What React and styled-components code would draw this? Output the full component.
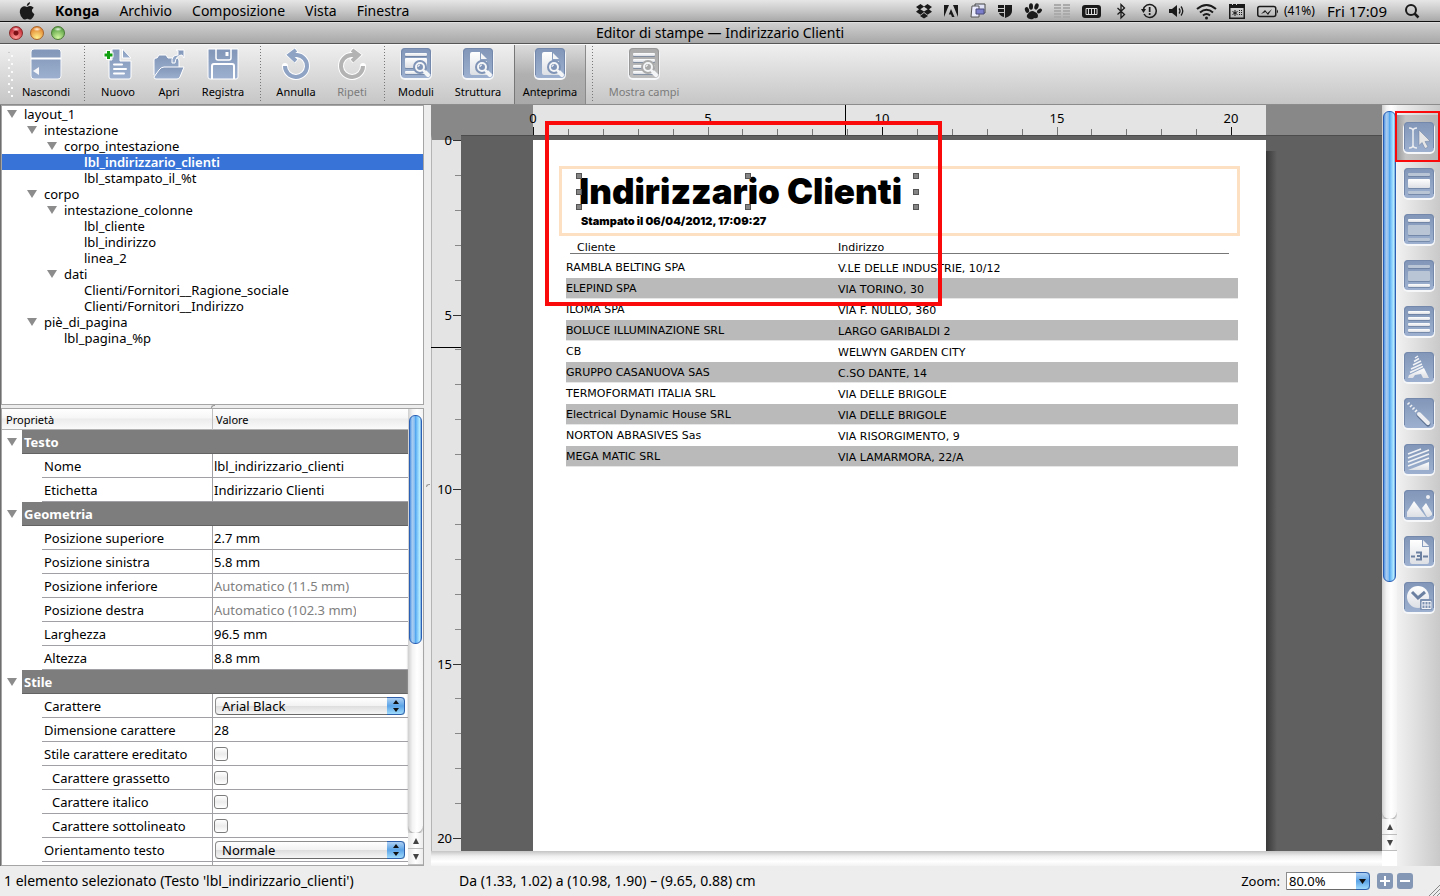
import React from "react";
import styled, { createGlobalStyle, css } from "styled-components";

const Global = createGlobalStyle`
  *, *::before, *::after { box-sizing: border-box; }
  html, body, #root { margin: 0; height: 100%; }
  body {
    font-family: "Noto Sans", "Open Sans", sans-serif;
    font-size: 13px;
    line-height: 16px;
    color: #000;
    background: #ededed;
    overflow: hidden;
  }
  button { font: inherit; color: inherit; background: none; border: 0; padding: 0; margin: 0; }
  h1, h2, p, ul { margin: 0; padding: 0; }
`;

/* ---------- shell ---------- */

const Screen = styled.div`
  display: flex;
  flex-direction: column;
  height: 100vh;
  min-width: 1100px;
`;

const MenuBar = styled.nav`
  display: flex;
  align-items: center;
  justify-content: space-between;
  flex: none;
  height: 22px;
  padding: 0 20px 0 19px;
  border-bottom: 1px solid #111;
  background: linear-gradient(#e6e6e6, #c9c9c9 50%, #a9a9a9);
  font-size: 14px;
`;

const MenuGroup = styled.div`
  display: flex;
  align-items: center;
  gap: ${(p) => p.$gap}px;
`;

const MenuItem = styled.button`
  font-weight: ${(p) => (p.$bold ? 700 : 400)};
  line-height: 20px;
`;

const StatusIcons = styled(MenuGroup)`
  svg { display: block; flex: none; }
`;

const Battery = styled.span`
  display: flex;
  align-items: center;
  gap: 5px;
  font-size: 12px;
`;

const Clock = styled.span`
  padding-right: 5px;
  font-size: 15px;
`;

const TitleBar = styled.header`
  position: relative;
  display: flex;
  align-items: center;
  justify-content: center;
  flex: none;
  height: 22px;
  border-top: 1px solid #dedede;
  border-bottom: 1px solid #565656;
  background: linear-gradient(#cfcfcf, #a8a8a8);
`;

const WindowTitle = styled.h1`
  font-size: 14px;
  font-weight: 400;
`;

const Lights = styled.div`
  position: absolute;
  left: 9px;
  top: 3px;
  display: flex;
  gap: 7px;
`;

const Light = styled.button`
  width: 14px;
  height: 14px;
  border-radius: 50%;
  border: 1px solid ${(p) => p.$edge};
  background:
    radial-gradient(ellipse 4px 2px at 50% 18%, rgba(255, 255, 255, 0.9), rgba(255, 255, 255, 0)),
    ${(p) => (p.$dot ? "radial-gradient(circle at 50% 50%, #7c1016 2px, transparent 3px)," : "")}
    radial-gradient(circle at 50% 90%, ${(p) => p.$glow}, ${(p) => p.$fill} 75%);
`;

/* ---------- toolbar ---------- */

const ToolBar = styled.div`
  display: flex;
  flex: none;
  height: 61px;
  border-top: 1px solid #f8f8f8;
  border-bottom: 1px solid #8c8c8c;
  background: linear-gradient(#efefef, #c6c6c6);
`;

const Grip = styled.span`
  width: 6px;
  margin: 6px 0 6px 8px;
  background:
    linear-gradient(#f6f6f6, #bdbdbd) 0 0 / 2px 2px no-repeat,
    radial-gradient(circle at 1px 1px, #fafafa 1px, transparent 1px) 0 0 / 6px 8px,
    radial-gradient(circle at 4px 5px, #fafafa 1px, transparent 1px) 0 0 / 6px 8px;
`;

const ToolButton = styled.button`
  display: flex;
  flex-direction: column;
  align-items: center;
  gap: 4px;
  width: ${(p) => p.$w}px;
  padding-top: 3px;
  font-size: 11px;
  color: ${(p) => (p.disabled ? "#7b7b7b" : "#000")};
  svg { display: block; }
  ${(p) =>
    p.$active &&
    css`
      border-left: 1px solid #777;
      border-right: 1px solid #8a8a8a;
      background: linear-gradient(#dcdcdc, #b0b0b0 50%, #a9a9a9);
    `}
`;

const Divider = styled.span`
  width: 12px;
  margin: 1px 0 3px;
  background: repeating-linear-gradient(#777 0 1px, transparent 1px 3px) 6px 0 / 1px 100% no-repeat;
`;

/* ---------- main area ---------- */

const Body = styled.div`
  display: flex;
  flex: 1;
  min-height: 0;
  border-left: 1px solid #6e6e6e;
`;

const Side = styled.aside`
  display: flex;
  flex-direction: column;
  flex: none;
  width: 423px;
  min-height: 0;
`;

const TreePanel = styled.ul`
  flex: none;
  height: 300px;
  border: 1px solid #a5a5a5;
  background: #fff;
  list-style: none;
`;

const TreeRow = styled.li`
  display: flex;
  align-items: center;
  gap: 2px;
  height: 16px;
  padding-left: ${(p) => p.$depth * 20}px;
  ${(p) => p.$selected && "background: #3874d8; color: #fff; font-weight: 600;"}
`;

const Twist = styled.span`
  display: flex;
  justify-content: center;
  flex: none;
  width: 20px;
  visibility: ${(p) => (p.$shown ? "visible" : "hidden")};
  &::after {
    content: "";
    border: 5px solid transparent;
    border-top: 8px solid #8c8c8c;
    border-bottom: 0;
  }
`;

const Splitter = styled.div`
  display: flex;
  align-items: center;
  justify-content: center;
  flex: none;
  ${(p) => (p.$vertical ? "width: 7px;" : "height: 3px;")}
  &::after {
    content: "";
    width: 4px;
    height: 3px;
    border: 1px solid #999;
    border-width: 1px 0 0 1px;
    border-radius: 3px 0 0 0;
  }
`;

const PropPanel = styled.section`
  display: flex;
  flex: 1;
  min-height: 0;
  border: 1px solid #a5a5a5;
  background: #fff;
`;

const PropView = styled.div`
  flex: 1;
  min-width: 0;
  overflow: hidden;
`;

const PropTable = styled.table`
  width: 100%;
  table-layout: fixed;
  border-collapse: separate;
  border-spacing: 0;
  td, th { padding: 0; text-align: left; white-space: nowrap; overflow: hidden; }
`;

const HeadCell = styled.th`
  height: 21px;
  border-bottom: 1px solid #b2b2b2;
  background: linear-gradient(#fff, #f6f6f6 45%, #ececec 50%, #fafafa);
  font-size: 11px;
  font-weight: 400;
  && { padding: 2px 0 0 4px; }
  & + & { border-left: 1px solid #c0c0c0; padding-left: 3px; }
`;

const SectionCell = styled.th`
  height: 24px;
  border-bottom: 1px solid #636363;
  background: #7d7d7d;
  color: #fff;
  font-weight: 700;
  && { padding-left: 2px; }
`;

const NameCell = styled.td`
  height: 24px;
  border-bottom: 1px solid #a0a0a5;
  && { padding-left: ${(p) => (p.$sub ? 10 : 2)}px; }
`;

const ValueCell = styled.td`
  height: 24px;
  border-bottom: 1px solid #a0a0a5;
  border-left: 1px solid #a0a0a5;
  color: ${(p) => (p.$auto ? "#808080" : "#000")};
  && { padding-left: 1px; }
`;

const ClipText = styled.span`
  display: block;
  width: 142px;
  overflow: hidden;
`;

const Check = styled.input`
  appearance: none;
  display: block;
  width: 14px;
  height: 14px;
  margin: 0;
  border: 1px solid #7d7d7d;
  border-radius: 3px;
  background: linear-gradient(#fff, #ececec 50%, #fff);
`;

const SelectBox = styled.div`
  position: relative;
  width: 190px;
  height: 18px;
  margin-left: ${(p) => (p.$square ? 0 : 1)}px;
  svg { position: absolute; right: 0; top: 0; pointer-events: none; }
  ${(p) => p.$square && "width: 84px;"}
`;

const Select = styled.select`
  appearance: none;
  display: block;
  width: 100%;
  height: 18px;
  padding: 0 6px;
  border: 1px solid #8d8d8d;
  border-bottom-color: #6a6a6a;
  border-radius: 4px;
  background: linear-gradient(#fff, #f2f2f2 50%, #dedede 52%, #f6f6f6);
  font: inherit;
  line-height: 16px;
  color: #000;
  ${(p) => p.$square && "border-radius: 0 4px 4px 0; background: #fff; padding: 0 2px;"}
`;

/* ---------- scroll bars ---------- */

const Bar = styled.div`
  display: flex;
  flex-direction: column;
  flex: none;
  width: 15px;
  height: 100%;
  padding-top: ${(p) => p.$top}px;
  background: linear-gradient(90deg, #cfcfcf, #f3f3f3 30%, #fff 60%, #f4f4f4);
`;

const Thumb = styled.div`
  flex: ${(p) => p.$grow} 1 0;
  margin: 0 1px 0 1px;
  border: 1px solid #2b5fb4;
  border-radius: 6px;
  background: linear-gradient(90deg, #4f90e0, #a9cdf2 20%, #8dc0f0 40%, #4da3ee 48%, #7cc4fa 65%, #b5ecff 88%, #6aa0d8);
`;

const Track = styled.div`
  flex: ${(p) => p.$grow} 1 0;
  border-radius: 0 0 8px 8px;
  box-shadow: 0 2px 2px #aaa;
`;

const Arrow = styled.button`
  display: flex;
  align-items: center;
  justify-content: center;
  flex: none;
  height: 16px;
  background: linear-gradient(90deg, #e6e6e6, #fff 50%, #ededed);
  border-bottom: 1px solid #bdbdbd;
  &::after {
    content: "";
    border: 3px solid transparent;
    ${(p) =>
      p.$up
        ? "border-bottom: 6px solid #444; border-top: 0;"
        : "border-top: 6px solid #444; border-bottom: 0;"}
  }
`;

/* ---------- design canvas ---------- */

const Canvas = styled.main`
  position: relative;
  display: flex;
  flex-direction: column;
  flex: 1;
  min-width: 0;
`;

const TopRuler = styled.div`
  display: flex;
  flex: none;
  height: 31px;
  border-bottom: 1px solid #4c4c4c;
  background: #888;
`;

const TopScale = styled.div`
  flex: none;
  width: 733px;
  margin-left: 102px;
  background: #e4e4e4;
  svg { display: block; overflow: visible; }
`;

const Middle = styled.div`
  display: flex;
  flex: 1;
  min-height: 0;
`;

const LeftRuler = styled.div`
  flex: none;
  width: 30px;
  margin-top: -1px;
  border-top: 5px solid #888;
  border-left: 1px solid #b4b4b4;
  background: #e4e4e4;
  svg { display: block; overflow: visible; }
`;

const Desk = styled.div`
  display: flex;
  flex: 1;
  min-width: 0;
  padding: 4px 0 0 72px;
  overflow: hidden;
  background: #606060;
`;

const Page = styled.article`
  flex: none;
  width: 733px;
  padding: 26px 26px 0;
  background: #fff;
`;

const PageShadow = styled.span`
  flex: none;
  width: 11px;
  margin-top: 11px;
  background: linear-gradient(90deg, #383838, #606060);
`;

const HTrack = styled.div`
  flex: none;
  height: 15px;
  background: linear-gradient(#c4c4c4, #f0f0f0 35%, #fff 70%, #f2f2f2);
`;

const PageHeader = styled.div`
  height: 70px;
  padding: 7px 0 0 17px;
  border: 3px solid #fde0c2;
`;

const Selection = styled.div`
  position: relative;
  width: 337px;
  height: 31px;
`;

const ReportTitle = styled.h2`
  font-family: Inter, "Liberation Sans", sans-serif;
  font-size: 35px;
  line-height: 31px;
  font-weight: 900;
  white-space: nowrap;
`;

const Stamp = styled.p`
  margin-top: 6px;
  padding-left: 2px;
  font-family: Inter, "Liberation Sans", sans-serif;
  font-size: 11px;
  font-weight: 900;
`;

const Handle = styled.span`
  position: absolute;
  left: ${(p) => p.$x}%;
  top: ${(p) => p.$y}%;
  width: 6px;
  height: 6px;
  margin: -3px;
  border: 1px solid #555;
  background: #858585;
`;

const Report = styled.table`
  width: 672px;
  margin-left: 7px;
  table-layout: fixed;
  border-collapse: separate;
  border-spacing: 0;
  font-family: "DejaVu Sans", sans-serif;
  font-size: 11px;
  td, th { height: 21px; padding: 0; text-align: left; font-weight: 400; vertical-align: top; white-space: nowrap; }
  td { padding-top: 2px; line-height: 18px; }
  td + td { padding-top: 3px; line-height: 17px; }
  tbody tr:nth-child(even) td {
    background: #bababa;
    border-bottom: 1px solid #e6e6e6;
  }
`;

const ReportHead = styled.span`
  display: block;
  height: 18px;
  border-bottom: 1px solid #777;
  line-height: 23px;
  ${(p) => (p.$first ? "margin-left: 4px; padding-left: 7px;" : "margin-right: 9px;")}
`;

const Callout = styled.div`
  position: absolute;
  pointer-events: none;
  border: ${(p) => p.$b}px solid #fa0a0a;
  left: ${(p) => p.$x}px;
  top: ${(p) => p.$y}px;
  width: ${(p) => p.$w}px;
  height: ${(p) => p.$h}px;
`;

const ScrollColumn = styled.div`
  display: flex;
  flex: none;
  width: 15px;
  padding-bottom: 15px;
  background: #fff;
`;

/* ---------- palette ---------- */

const Palette = styled.div`
  position: relative;
  flex: none;
  width: 43px;
  padding-top: 10px;
  background: linear-gradient(90deg, #f1f1f1, #c9c9c9);
`;

const PaletteButton = styled.button`
  display: flex;
  align-items: center;
  justify-content: center;
  width: 100%;
  height: 46px;
  ${(p) => p.$active && "background: linear-gradient(90deg, #9b9b9b, #c4c4c4 20%, #b4b4b4);"}
  svg { display: block; }
`;

/* ---------- status bar ---------- */

const StatusBar = styled.footer`
  display: flex;
  align-items: center;
  flex: none;
  height: 30px;
  padding-left: 4px;
  background: #ededed;
`;

const SelectionInfo = styled.span`
  flex: none;
  width: 455px;
  font-size: 14px;
`;

const AreaInfo = styled.span`
  flex: 1;
  font-size: 14px;
`;

const ZoomLabel = styled.label`
  margin-right: 6px;
`;

const ZoomButton = styled.button`
  display: flex;
  width: 16px;
  height: 16px;
  margin-left: ${(p) => (p.$first ? 7 : 4)}px;
  border-radius: 3px;
  background: #8497b5;
`;

const Corner = styled.svg`
  align-self: flex-end;
  margin-left: 16px;
`;

/* ---------- icon artwork ---------- */

const SharedDefs = () => (
  <svg width="0" height="0" style={{ position: "absolute" }} aria-hidden="true">
    <defs>
      <linearGradient id="blue" x1="0" y1="0" x2="0" y2="1">
        <stop offset="0" stopColor="#8196b8" />
        <stop offset="1" stopColor="#9db0cf" />
      </linearGradient>
      <linearGradient id="grey" x1="0" y1="0" x2="0" y2="1">
        <stop offset="0" stopColor="#a9a9a9" />
        <stop offset="1" stopColor="#bdbdbd" />
      </linearGradient>
      <linearGradient id="pale" x1="0" y1="0" x2="0" y2="1">
        <stop offset="0" stopColor="#fff" />
        <stop offset="1" stopColor="#dcdfe4" />
      </linearGradient>
      <linearGradient id="aqua" x1="0" y1="0" x2="0" y2="1">
        <stop offset="0" stopColor="#b9d6f5" />
        <stop offset="0.5" stopColor="#5ba4e8" />
        <stop offset="1" stopColor="#a8e2ff" />
      </linearGradient>
    </defs>
  </svg>
);

const Tile = ({ grey, children }) => (
  <svg width="32" height="32" viewBox="0 0 32 32" aria-hidden="true">
    <rect x="0" y="1" width="32" height="31" rx="5" fill="#f6f7f9" />
    <rect x="1" y="0" width="30" height="30" rx="4" fill={grey ? "url(#grey)" : "url(#blue)"} />
    <path d="M1.500 27V4q0-3.500 3.500-3.500h22q3.500 0 3.500 3.500v22" fill="none" stroke={grey ? "#979797" : "#7388aa"} />
    {children}
  </svg>
);

const Lines = ({ rows }) =>
  rows.map(([y, h, soft], i) => (
    <g key={i}>
      <rect x="5" y={y + 1} width="22" height={h} rx="1" fill="#5f7394" opacity="0.6" />
      <rect x="5" y={y} width="22" height={h} rx="1" fill={soft ? "#b9c4d5" : "url(#pale)"} />
    </g>
  ));

const Lens = ({ c = "#7f94b6", x = 20, y = 19 }) => (
  <g>
    <path d={`M${x + 3} ${y + 3}l5 5`} stroke="#f4f5f7" strokeWidth="4" strokeLinecap="round" />
    <circle cx={x} cy={y} r="7" fill={c} />
    <circle cx={x} cy={y} r="4" fill={c} stroke="#f4f5f7" strokeWidth="2" />
    <path d={`M${x + 4} ${y + 4}l4 4`} stroke="#f4f5f7" strokeWidth="3" strokeLinecap="round" />
    <path d={`M${x - 2} ${y}q0-2 2-2`} stroke="#fff" fill="none" />
  </g>
);

const Free = ({ children }) => (
  <svg width="32" height="32" viewBox="0 0 32 32" aria-hidden="true">
    {children}
  </svg>
);

const HideIcon = () => (
  <Free>
    <rect x="1" y="1" width="30" height="30" rx="3" fill="url(#blue)" stroke="#f6f7f9" />
    <path d="M1 10.500h30" stroke="#fff" strokeWidth="2" />
    <path d="M9 19v8l-6-4z" fill="#f4f6f9" />
  </Free>
);

const NewIcon = () => (
  <Free>
    <path d="M10 1h8v12h11v16q0 2-2 2H9q-2 0-2-2V12h3z" fill="url(#blue)" stroke="#fff" />
    <path d="M20.500 1l8.500 9h-8.500z" fill="url(#blue)" stroke="#fff" />
    <path d="M12 16.500h8M12 21h12M12 25.500h10" stroke="#fff" strokeWidth="2" strokeLinecap="round" />
    <path d="M6.500 2v10M1.500 7h10" stroke="#fff" strokeWidth="5" />
    <path d="M6.500 3v8M2.500 7h8" stroke="#12a012" strokeWidth="3" />
  </Free>
);

const OpenIcon = () => (
  <Free>
    <path d="M1 27V12q0-2 2-2h1l2-3h7l2 3h9q2 0 2 3v8" fill="url(#blue)" stroke="#fff" />
    <path d="M1 29l5-7q2-3 5-3h20l-4 10q-1 2-3 2H3q-2 0-2-2z" fill="url(#blue)" stroke="#fff" />
    <path d="M19 15q-1-8 6-8V3l-2-1h8v8l-2-3q-6 0-7 8z" fill="url(#blue)" stroke="#fff" strokeLinejoin="round" />
  </Free>
);

const SaveIcon = () => (
  <Free>
    <path d="M1 1h30v28q0 2-2 2H3q-2 0-2-2z" fill="url(#blue)" stroke="#fff" />
    <path d="M9 1v9q0 2 2 2h11q2 0 2-2V1" fill="none" stroke="#fff" strokeWidth="1.500" />
    <path d="M20 4v4" stroke="#fff" strokeWidth="3" />
    <path d="M5 31V18q0-2 2-2h18q2 0 2 2v13" fill="none" stroke="#fff" strokeWidth="2" />
  </Free>
);

const Turn = ({ flip, tone }) => (
  <Free>
    <g transform={flip ? "translate(32 0) scale(-1 1)" : undefined} fill="none">
      <path d="M5 18a11 11 0 1 0 12-11" stroke="#fff" strokeWidth="6" strokeLinecap="round" />
      <path d="M17 2l-7 5 7 6" stroke="#fff" strokeWidth="6" />
      <path d="M5 18a11 11 0 1 0 12-11h-6" stroke={tone} strokeWidth="4" />
      <path d="M16 2L9.500 7l6.500 6" stroke={tone} strokeWidth="4" />
    </g>
  </Free>
);

const PageLensIcon = () => (
  <Tile>
    <path d="M10 4h8v9h7v14H10q-2 0-2-2V6q0-2 2-2z" fill="url(#pale)" />
    <path d="M19 5l6 6h-6z" fill="#f4f6f8" />
    <Lens />
  </Tile>
);

const PAPER = "M7 4h12v7h7v15q0 2-2 2H9q-2 0-2-2z";

const paletteTools = [
  {
    name: "Seleziona",
    art: (
      <g>
        <path d="M6 6q4 0 4 3v14q0 3-4 3M14 6q-4 0-4 3M10 23q0 3 4 3" fill="none" stroke="#eceef1" strokeWidth="1.500" />
        <path d="M16 8l11 11-5 .5 3 5.500-3 1.500-3-6-3 3z" fill="#e6e6e6" stroke="#6c7f9d" strokeWidth="0.500" />
      </g>
    ),
  },
  { name: "Corpo", art: <Lines rows={[[5, 3, true], [11, 9], [23, 3, true]]} /> },
  { name: "Intestazione", art: <Lines rows={[[5, 3], [11, 10, true], [24, 3, true]]} /> },
  { name: "Piè di pagina", art: <Lines rows={[[5, 3, true], [11, 10, true], [24, 3]]} /> },
  { name: "Righe", art: <Lines rows={[[5, 3], [11, 3], [17, 3], [23, 3]]} /> },
  {
    name: "Testo",
    art: (
      <g>
        <path d="M12 6l3-2M11 9.500l5-3M10 13l8-4M8 17l11-5M7 20.500l13-6" stroke="#f0f2f5" strokeWidth="1.500" />
        <path d="M5 26l1-3 15-7 5 10h-6l-2-4-6 1-2 3z" fill="url(#pale)" />
      </g>
    ),
  },
  {
    name: "Linea",
    art: (
      <g>
        <path d="M5 5l10 10" stroke="#f0f2f5" strokeWidth="3" strokeDasharray="1.500 2" />
        <path d="M16 17l9 9" stroke="#5f7394" strokeWidth="5" strokeLinecap="round" />
        <path d="M16 16l9 9" stroke="#eceef1" strokeWidth="4" strokeLinecap="round" />
      </g>
    ),
  },
  {
    name: "Rettangolo",
    art: (
      <g>
        <path d="M5 10l13-5M5 14l21-8M5 18l21-8M5 22l21-8" stroke="#f0f2f5" strokeWidth="1.500" />
        <path d="M5 26l21-8v8z" fill="url(#pale)" />
      </g>
    ),
  },
  {
    name: "Immagine",
    art: (
      <g>
        <circle cx="25" cy="7" r="2" fill="#eceef1" />
        <path d="M4 27V22L11 11l12 16z" fill="url(#pale)" />
        <path d="M19 18l4-5 6 10v2l-3 2h-2z" fill="url(#pale)" />
      </g>
    ),
  },
  {
    name: "Numero di pagina",
    art: (
      <g>
        <path d={PAPER} fill="url(#pale)" />
        <path d="M20 4l6 6h-6z" fill="#eceef1" />
        <path d="M8 20.500h4M20 20.500h5" stroke="#6c80a2" strokeWidth="2" />
        <path d="M13 16.500h5v7h-5M14 20h4" fill="none" stroke="#6c80a2" strokeWidth="2" />
      </g>
    ),
  },
  {
    name: "Data e ora",
    art: (
      <g>
        <circle cx="15" cy="15" r="11" fill="url(#pale)" />
        <path d="M9 10l6 6 7-6" fill="none" stroke="#6c80a2" strokeWidth="3" />
        <rect x="17" y="17" width="12" height="11" rx="1" fill="#7d91b3" />
        <path d="M19 19.500h9v7h-9zM19 23h9M22 19v8M25 19v8" fill="none" stroke="#f2f4f7" />
      </g>
    ),
  },
];

const AppleLogo = () => (
  <svg width="16" height="18" viewBox="0 0 16 18" aria-hidden="true">
    <path
      d="M11 0q0 3-3.200 4Q7.800 1.200 11 0zM8 5q2.500-1.400 4.500-.7 1.500.5 2.200 1.500-4 3.200.7 6.400-1 3.300-3.200 5-1 .6-2.400 0-1.500-.7-3 0-1.600.6-2.600-.1Q1.200 14.500.8 10.500.6 6 4 4.500 6 4 8 5z"
      fill="#1b1b1b"
    />
  </svg>
);

const Glyph = ({ w = 16, children }) => (
  <svg width={w} height="18" viewBox={`0 0 ${w} 18`} aria-hidden="true" fill="#1a1a1a">
    {children}
  </svg>
);

const barGrid = [3, 6, 9, 12, 15];

const StatusGlyphs = () => (
  <>
    <Glyph>
      <path d="M4.500 2L8 4.500 11.500 2 16 5l-3 2.300 3 2.400-4.500 3L8 10l-3.500 2.700L0 9.700l3-2.400L0 5zM8 4.800L4.300 7.300 8 9.500l3.700-2.200zM8 11l4 3-4 2.500L4 14z" />
    </Glyph>
    <Glyph w={14}>
      <path d="M0 3h5L0 15zM9 3h5v12zM7 7l3.500 8H8l-1-2.500H4.800z" />
    </Glyph>
    <Glyph>
      <path d="M5 2h10v9H5z" fill="#dfe3f5" stroke="#444" />
      <path d="M2 4h7v11H1z" fill="#ececff" stroke="#555" />
      <path d="M6 7h8v5H6z" fill="#7d7ecb" stroke="#4b4c7b" />
    </Glyph>
    <Glyph w={14}>
      <path d="M0 3h6v3H0zM0 7h6v3H0zM1 11h5v4q-4-1-5-4zM7 3h7v6q0 5-7 7z" />
    </Glyph>
    <Glyph w={18}>
      <ellipse cx="3" cy="8" rx="2" ry="3" transform="rotate(-20 3 8)" />
      <ellipse cx="7" cy="4.500" rx="2" ry="3.200" />
      <ellipse cx="12.500" cy="4.500" rx="2" ry="3.200" transform="rotate(20 12.500 4.500)" />
      <ellipse cx="15.500" cy="9" rx="1.800" ry="2.800" transform="rotate(50 15.500 9)" />
      <path d="M3 13q4-6 8-3 3 1 3 4 0 3-4 2-1 2-4 1-4-1-3-4z" />
    </Glyph>
    <Glyph>
      {barGrid.map((y) => (
        <path key={y} d={`M0 ${y - 1}h7v2H0zM9 ${y - 1}h7v2H9z`} fill="#aaa" />
      ))}
    </Glyph>
    <Glyph w={19}>
      <rect x="0" y="3" width="19" height="13" rx="3" />
      <path d="M4 6.500h11v6H4z" fill="none" stroke="#ddd" />
      <path d="M6.500 7v5M9.500 7v5M12.500 7v5" stroke="#ddd" />
    </Glyph>
    <Glyph>
      <path d="M4.500 6l7 6.500L8 16V2.500L11.500 6l-7 6.500" fill="none" stroke="#1a1a1a" strokeWidth="1.300" />
    </Glyph>
    <Glyph>
      <path d="M3 12a6.500 6.500 0 1 0-.7-4" fill="none" stroke="#1a1a1a" strokeWidth="1.500" />
      <path d="M0 7h5l-2.500 4zM7.800 5h1.700v5H7.800zM7.800 11h1.700v2H7.800z" />
    </Glyph>
    <Glyph w={15}>
      <path d="M0 7h3l5-4v12l-5-4H0z" />
      <path d="M10 6.500q2 2.500 0 5M12 4.500q3.500 4.500 0 9" fill="none" stroke="#1a1a1a" strokeWidth="1.300" />
    </Glyph>
    <Glyph w={21}>
      <path d="M1 7q9.500-8 19 0M4 10.500q6.500-5.500 13 0M7 13.500q3.500-3 7 0" fill="none" stroke="#1a1a1a" strokeWidth="2" />
      <circle cx="10.500" cy="16" r="1.500" />
    </Glyph>
    <Glyph>
      <path d="M.75 3v13.250h14.500V3" fill="none" stroke="#1a1a1a" strokeWidth="1.500" />
      <path d="M0 2h3v1h1V2h3v1h1V2h8v4H0z" />
      <path d="M6 8v6M3.500 9.500l5 3M8.500 9.500l-5 3" stroke="#1a1a1a" />
      <path d="M10.500 8v6M12.500 8v6" stroke="#1a1a1a" strokeDasharray="1 1" />
    </Glyph>
    <Battery>
      <Glyph w={22}>
        <rect x="0.750" y="4.500" width="18" height="10" rx="2" fill="none" stroke="#1a1a1a" strokeWidth="1.500" />
        <path d="M20 7.500q2 2 0 4z" />
        <path d="M4 12l4-4 2.500 3L15 7l-4 6-2.500-3z" />
      </Glyph>
      (41%)
    </Battery>
  </>
);

const Stepper = () => (
  <svg width="18" height="18" viewBox="0 0 18 18" aria-hidden="true">
    <path d="M0 0h14q4 0 4 4v10q0 4-4 4H0z" fill="url(#aqua)" />
    <path d="M0 .5h14q3.500 0 3.500 3.500v10q0 3.500-3.500 3.500H0" fill="none" stroke="#2e5fa8" />
    <path d="M6 7l3-4 3 4zM6 11l3 4 3-4z" fill="#111" />
  </svg>
);

const DropArrow = () => (
  <svg width="14" height="18" viewBox="0 0 14 18" aria-hidden="true">
    <path d="M0 0h10q4 0 4 4v10q0 4-4 4H0z" fill="url(#aqua)" />
    <path d="M0 .5h10q3.500 0 3.500 3.500v10q0 3.500-3.500 3.500H0" fill="none" stroke="#2e5fa8" />
    <path d="M3 7h7l-3.500 5z" fill="#111" />
  </svg>
);

/* ---------- data ---------- */

const toolGroups = [
  [{ label: "Nascondi", w: 64, icon: <HideIcon /> }],
  [
    { label: "Nuovo", w: 56, icon: <NewIcon /> },
    { label: "Apri", w: 46, icon: <OpenIcon /> },
    { label: "Registra", w: 62, icon: <SaveIcon /> },
  ],
  [
    { label: "Annulla", w: 60, icon: <Turn tone="#8fa3c4" /> },
    { label: "Ripeti", w: 52, icon: <Turn flip tone="#b3b3b3" />, disabled: true },
  ],
  [
    {
      label: "Moduli",
      w: 52,
      icon: (
        <Tile>
          <Lines rows={[[5, 3], [10, 10], [23, 3]]} />
          <Lens />
        </Tile>
      ),
    },
    { label: "Struttura", w: 72, icon: <PageLensIcon /> },
    { label: "Anteprima", w: 72, icon: <PageLensIcon />, active: true },
  ],
  [
    {
      label: "Mostra campi",
      w: 92,
      disabled: true,
      icon: (
        <Tile grey>
          <Lines rows={[[5, 3], [11, 3], [17, 3], [23, 3]]} />
          <Lens c="#a9a9a9" />
        </Tile>
      ),
    },
  ],
];

const tree = [
  [0, "layout_1", true],
  [1, "intestazione", true],
  [2, "corpo_intestazione", true],
  [3, "lbl_indirizzario_clienti", false, true],
  [3, "lbl_stampato_il_%t"],
  [1, "corpo", true],
  [2, "intestazione_colonne", true],
  [3, "lbl_cliente"],
  [3, "lbl_indirizzo"],
  [3, "linea_2"],
  [2, "dati", true],
  [3, "Clienti/Fornitori__Ragione_sociale"],
  [3, "Clienti/Fornitori__Indirizzo"],
  [1, "piè_di_pagina", true],
  [2, "lbl_pagina_%p"],
];

const properties = [
  { section: "Testo" },
  { name: "Nome", value: "lbl_indirizzario_clienti" },
  { name: "Etichetta", value: "Indirizzario Clienti" },
  { section: "Geometria" },
  { name: "Posizione superiore", value: "2.7 mm" },
  { name: "Posizione sinistra", value: "5.8 mm" },
  { name: "Posizione inferiore", value: "Automatico (11.5 mm)", auto: true },
  { name: "Posizione destra", value: "Automatico (102.3 mm)", auto: true },
  { name: "Larghezza", value: "96.5 mm" },
  { name: "Altezza", value: "8.8 mm" },
  { section: "Stile" },
  { name: "Carattere", options: ["Arial Black"] },
  { name: "Dimensione carattere", value: "28" },
  { name: "Stile carattere ereditato", check: true },
  { name: "Carattere grassetto", check: true, sub: true },
  { name: "Carattere italico", check: true, sub: true },
  { name: "Carattere sottolineato", check: true, sub: true },
  { name: "Orientamento testo", options: ["Normale"] },
  { name: "", value: "" },
];

const clients = [
  ["RAMBLA BELTING SPA", "V.LE DELLE INDUSTRIE, 10/12"],
  ["ELEPIND SPA", "VIA TORINO, 30"],
  ["ILOMA SPA", "VIA F. NULLO, 360"],
  ["BOLUCE ILLUMINAZIONE SRL", "LARGO GARIBALDI 2"],
  ["CB", "WELWYN GARDEN CITY"],
  ["GRUPPO CASANUOVA SAS", "C.SO DANTE, 14"],
  ["TERMOFORMATI ITALIA SRL", "VIA DELLE BRIGOLE"],
  ["Electrical Dynamic House SRL", "VIA DELLE BRIGOLE"],
  ["NORTON ABRASIVES Sas", "VIA RISORGIMENTO, 9"],
  ["MEGA MATIC SRL", "VIA LAMARMORA, 22/A"],
];

const handles = [[0, 0], [50, 0], [100, 0], [0, 50], [100, 50], [0, 100], [50, 100], [100, 100]];

const CM = 34.9;
const centimetres = Array.from({ length: 21 }, (_, n) => n);
const at = (n) => Math.round(n * CM);

/* ---------- parts ---------- */

const ScrollBar = ({ top, thumb, rest }) => (
  <Bar $top={top}>
    <Thumb $grow={thumb} />
    <Track $grow={rest} />
    <Arrow $up aria-label="Scorri su" />
    <Arrow aria-label="Scorri giù" />
  </Bar>
);

const PropRow = ({ item, index }) => {
  if (item.section) {
    return (
      <tr>
        <td><Twist $shown /></td>
        <SectionCell colSpan={3}>{item.section}</SectionCell>
      </tr>
    );
  }
  const id = `prop-${index}`;
  const control = item.check || item.options;
  return (
    <tr>
      <td colSpan={2} />
      <NameCell $sub={item.sub}>{control ? <label htmlFor={id}>{item.name}</label> : item.name}</NameCell>
      <ValueCell $auto={item.auto}>
        {item.check && <Check type="checkbox" id={id} />}
        {item.options && (
          <SelectBox>
            <Select id={id}>
              {item.options.map((o) => <option key={o}>{o}</option>)}
            </Select>
            <Stepper />
          </SelectBox>
        )}
        {item.auto ? <ClipText>{item.value}</ClipText> : item.value}
      </ValueCell>
    </tr>
  );
};

const HorizontalRuler = () => (
  <svg width="733" height="30" fontSize="13" textAnchor="middle" aria-label="Righello orizzontale">
    {centimetres.map((n) => (
      <g key={n}>
        <path d={`M${at(n) + 0.5} ${n % 5 ? 24 : 22}V30`} stroke={n % 10 ? "#777" : "#111"} />
        {n % 5 === 0 && <text x={at(n)} y="18">{n}</text>}
      </g>
    ))}
    <path d="M312.500 0V30" stroke="#000" />
  </svg>
);

const VerticalRuler = () => (
  <svg width="29" height="710" fontSize="13" textAnchor="end" aria-label="Righello verticale">
    {centimetres.map((n) => (
      <g key={n}>
        <path d={`M${n % 5 ? 23 : 21} ${at(n) + 0.5}H29`} stroke={n % 5 ? "#888" : "#333"} />
        {n % 5 === 0 && <text x="20" y={at(n) + 5}>{n}</text>}
      </g>
    ))}
    <path d="M-1 207.500H29" stroke="#000" />
  </svg>
);

export default function App() {
  return (
    <Screen>
      <Global />
      <SharedDefs />
      <MenuBar>
        <MenuGroup $gap={20}>
          <AppleLogo />
          <MenuItem $bold>Konga</MenuItem>
          <MenuItem>Archivio</MenuItem>
          <MenuItem>Composizione</MenuItem>
          <MenuItem>Vista</MenuItem>
          <MenuItem>Finestra</MenuItem>
        </MenuGroup>
        <StatusIcons $gap={12}>
          <StatusGlyphs />
          <Clock>Fri 17:09</Clock>
          <Glyph>
            <circle cx="7" cy="8" r="5" fill="none" stroke="#1a1a1a" strokeWidth="2" />
            <path d="M10.500 11.500l4 4" stroke="#1a1a1a" strokeWidth="2.500" />
          </Glyph>
        </StatusIcons>
      </MenuBar>

      <TitleBar>
        <Lights>
          <Light aria-label="Chiudi" $edge="#8a2a2a" $fill="#c8303a" $glow="#ff9a94" $dot />
          <Light aria-label="Riduci" $edge="#a8632a" $fill="#e58b35" $glow="#fff08c" />
          <Light aria-label="Ingrandisci" $edge="#4a7a35" $fill="#5fa448" $glow="#d3f7a0" />
        </Lights>
        <WindowTitle>Editor di stampe — Indirizzario Clienti</WindowTitle>
      </TitleBar>

      <ToolBar>
        <Grip />
        {toolGroups.map((group, i) => (
          <React.Fragment key={i}>
            {i > 0 && <Divider />}
            {group.map((t) => (
              <ToolButton key={t.label} $w={t.w} $active={t.active} disabled={t.disabled}>
                {t.icon}
                {t.label}
              </ToolButton>
            ))}
          </React.Fragment>
        ))}
      </ToolBar>

      <Body>
        <Side>
          <TreePanel>
            {tree.map(([depth, label, open, selected]) => (
              <TreeRow key={label} $depth={depth} $selected={selected}>
                <Twist $shown={open} />
                {label}
              </TreeRow>
            ))}
          </TreePanel>
          <Splitter />
          <PropPanel>
            <PropView>
              <PropTable>
                <colgroup>
                  <col width="20" />
                  <col width="20" />
                  <col width="170" />
                  <col />
                </colgroup>
                <thead>
                  <tr>
                    <HeadCell colSpan={3}>Proprietà</HeadCell>
                    <HeadCell>Valore</HeadCell>
                  </tr>
                </thead>
                <tbody>
                  {properties.map((item, i) => <PropRow key={i} item={item} index={i} />)}
                </tbody>
              </PropTable>
            </PropView>
            <ScrollBar top={6} thumb={228} rest={190} />
          </PropPanel>
        </Side>
        <Splitter $vertical />
        <Canvas>
          <TopRuler>
            <TopScale><HorizontalRuler /></TopScale>
          </TopRuler>
          <Middle>
            <LeftRuler><VerticalRuler /></LeftRuler>
            <Desk>
              <Page>
                <PageHeader>
                  <Selection>
                    <ReportTitle>Indirizzario Clienti</ReportTitle>
                    {handles.map(([x, y]) => <Handle key={`${x}-${y}`} $x={x} $y={y} />)}
                  </Selection>
                  <Stamp>Stampato il 06/04/2012, 17:09:27</Stamp>
                </PageHeader>
                <Report>
                  <colgroup>
                    <col width="272" />
                    <col />
                  </colgroup>
                  <thead>
                    <tr>
                      <th><ReportHead $first>Cliente</ReportHead></th>
                      <th><ReportHead>Indirizzo</ReportHead></th>
                    </tr>
                  </thead>
                  <tbody>
                    {clients.map(([name, address]) => (
                      <tr key={name}>
                        <td>{name}</td>
                        <td>{address}</td>
                      </tr>
                    ))}
                  </tbody>
                </Report>
              </Page>
              <PageShadow />
            </Desk>
          </Middle>
          <HTrack />
          <Callout $b={4} $x={114} $y={16} $w={397} $h={185} />
        </Canvas>
        <ScrollColumn>
          <ScrollBar top={6} thumb={472} rest={238} />
        </ScrollColumn>
        <Palette>
          {paletteTools.map((t, i) => (
            <PaletteButton key={t.name} $active={i === 0} aria-label={t.name}>
              <Tile>{t.art}</Tile>
            </PaletteButton>
          ))}
          <Callout $b={2} $x={-2} $y={6} $w={45} $h={51} />
        </Palette>
      </Body>

      <StatusBar>
        <SelectionInfo>1 elemento selezionato (Testo 'lbl_indirizzario_clienti')</SelectionInfo>
        <AreaInfo>Da (1.33, 1.02) a (10.98, 1.90) – (9.65, 0.88) cm</AreaInfo>
        <ZoomLabel htmlFor="zoom">Zoom:</ZoomLabel>
        <SelectBox $square>
          <Select id="zoom" $square>
            <option>80.0%</option>
          </Select>
          <DropArrow />
        </SelectBox>
        <ZoomButton $first aria-label="Ingrandisci">
          <svg width="16" height="16" aria-hidden="true"><path d="M8 3v10M3 8h10" stroke="#fff" strokeWidth="2" /></svg>
        </ZoomButton>
        <ZoomButton aria-label="Riduci">
          <svg width="16" height="16" aria-hidden="true"><path d="M3 8h10" stroke="#fff" strokeWidth="2" /></svg>
        </ZoomButton>
        <Corner width="11" height="11" aria-hidden="true">
          <path d="M0 11L11 0M4 11l7-7M8 11l3-3" stroke="#888" />
        </Corner>
      </StatusBar>
    </Screen>
  );
}
